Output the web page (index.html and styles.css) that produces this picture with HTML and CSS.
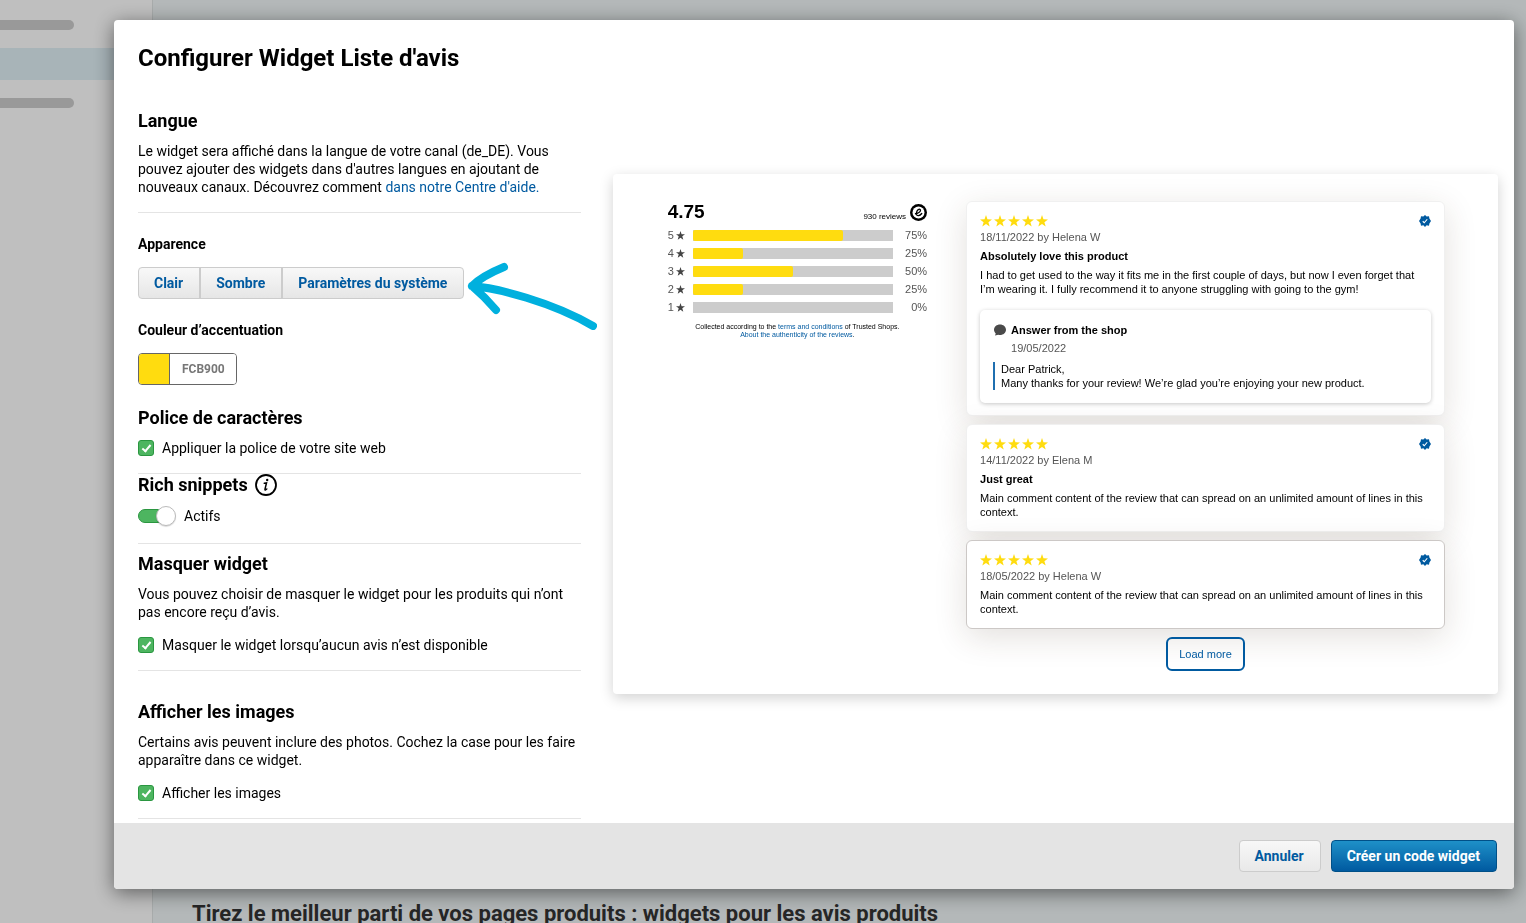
FILE: index.html
```html
<!DOCTYPE html>
<html lang="fr">
<head>
  <meta charset="UTF-8">
  <meta name="viewport" content="width=device-width, initial-scale=1">
  <title>Configurer Widget Liste d'avis</title>
  <link rel="stylesheet" href="styles.css">
</head>
<body>

<!-- shared icons -->
<svg class="icons" aria-hidden="true">
  <symbol id="star" viewBox="0 0 24 24"><path d="M12 0l2.900 8.600 9.100.2-7.200 5.500 2.600 8.700L12 17.800l-7.400 5.200 2.600-8.700L0 8.800l9.100-.2z"/></symbol>
  <symbol id="verified" viewBox="0 0 24 24"><path fill="#005aa0" d="M12 0l3.300 3.200 4.700-.9.800 4.600L24 12l-3.200 4.800-.8 4.700-4.700-.8L12 24l-3.300-3.300-4.700.8-.8-4.700L0 12l3.200-5.100L4 2.300l4.700.9z"/><path fill="none" stroke="#fff" stroke-width="2.200" d="M7.500 12.500l3 3 6-7"/></symbol>
</svg>

<div class="page">
  <aside class="sidebar">
    <div class="nav-item"><span></span></div>
    <div class="nav-item active"></div>
    <div class="nav-item"><span></span></div>
  </aside>
  <main class="content">
    <h2>Tirez le meilleur parti de vos pages produits : widgets pour les avis produits</h2>
  </main>
</div>

<div class="overlay">
  <div class="modal" role="dialog" aria-labelledby="modalTitle">
    <div class="modal-body">
      <h1 id="modalTitle">Configurer Widget Liste d'avis</h1>

      <div class="columns">
        <form class="settings">
          <section>
            <h2>Langue</h2>
            <p>Le widget sera affiché dans la langue de votre canal (de_DE). Vous pouvez ajouter des widgets dans d'autres langues en ajoutant de nouveaux canaux. Découvrez comment <a href="#">dans notre Centre d'aide.</a></p>
          </section>

          <section class="look">
            <h3>Apparence</h3>
            <div class="btn-group">
              <button type="button">Clair</button>
              <button type="button">Sombre</button>
              <button type="button">Paramètres du système</button>
              <svg class="arrow" viewBox="0 0 130 68" aria-hidden="true">
                <path d="M37 5Q15 14 5 24Q18 35 29 48M5 24C30 26 85 40 126 64" fill="none" stroke="#00b0de" stroke-width="8" stroke-linecap="round" stroke-linejoin="round"/>
              </svg>
            </div>
            <h3>Couleur d’accentuation</h3>
            <div class="color-field">
              <input type="color" value="#ffdc0f" aria-label="Couleur d’accentuation">
              <input type="text" value="FCB900" aria-label="Code couleur">
            </div>
            <h2>Police de caractères</h2>
            <label class="check"><input type="checkbox" checked> Appliquer la police de votre site web</label>
          </section>

          <section class="rich">
            <h2>Rich snippets
              <svg class="info" viewBox="0 0 22 22" aria-hidden="true">
                <circle cx="11" cy="11" r="10" fill="none" stroke="#000" stroke-width="1.800"/>
                <circle cx="12.200" cy="6" r="1.200"/>
                <path d="M9.300 9.300l2.200-.4-1.500 6.300q-.2 1 .6.600l1.200-.8" fill="none" stroke="#000" stroke-width="1.500" stroke-linecap="round"/>
              </svg>
            </h2>
            <label class="toggle"><input type="checkbox" checked> Actifs</label>
          </section>

          <section class="hide-widget">
            <h2>Masquer widget</h2>
            <p>Vous pouvez choisir de masquer le widget pour les produits qui n’ont pas encore reçu d’avis.</p>
            <label class="check"><input type="checkbox" checked> Masquer le widget lorsqu’aucun avis n’est disponible</label>
          </section>

          <section class="show-images">
            <h2>Afficher les images</h2>
            <p>Certains avis peuvent inclure des photos. Cochez la case pour les faire apparaître dans ce widget.</p>
            <label class="check"><input type="checkbox" checked> Afficher les images</label>
          </section>
        </form>

        <div class="preview">
          <div class="summary">
            <div class="summary-head">
              <strong>4.75</strong>
              <span>930 reviews</span>
              <svg class="logo" viewBox="0 0 34 34" aria-hidden="true">
                <circle cx="17" cy="17" r="17"/>
                <circle cx="17" cy="17" r="12" fill="#fff"/>
                <path d="M11 19.500Q20.500 17.500 21 13Q21 10 18 10.500Q13.500 12 12.800 18.500Q12.500 23.500 17 23.200Q20.500 22.800 23.500 19" fill="none" stroke="#000" stroke-width="2.600" stroke-linecap="round"/>
              </svg>
            </div>
            <ul class="bars">
              <li>5 <svg><use href="#star"/></svg><span class="bar"><i style="width: 75%"></i></span><b>75%</b></li>
              <li>4 <svg><use href="#star"/></svg><span class="bar"><i style="width: 25%"></i></span><b>25%</b></li>
              <li>3 <svg><use href="#star"/></svg><span class="bar"><i style="width: 50%"></i></span><b>50%</b></li>
              <li>2 <svg><use href="#star"/></svg><span class="bar"><i style="width: 25%"></i></span><b>25%</b></li>
              <li>1 <svg><use href="#star"/></svg><span class="bar"><i style="width: 0%"></i></span><b>0%</b></li>
            </ul>
            <p class="legal">Collected according to the <a href="#">terms and conditions</a> of Trusted Shops.<br><a href="#">About the authenticity of the reviews</a>.</p>
          </div>

          <div class="reviews">
            <article class="review">
              <div class="review-top">
                <svg><use href="#star"/></svg><svg><use href="#star"/></svg><svg><use href="#star"/></svg><svg><use href="#star"/></svg><svg><use href="#star"/></svg>
                <svg class="verified"><use href="#verified"/></svg>
              </div>
              <div class="date">18/11/2022 by Helena W</div>
              <h4>Absolutely love this product</h4>
              <p>I had to get used to the way it fits me in the first couple of days, but now I even forget that I’m wearing it. I fully recommend it to anyone struggling with going to the gym!</p>
              <div class="answer">
                <svg class="bubble" viewBox="0 0 24 24" aria-hidden="true"><path d="M12 1C5.500 1 0 5.500 0 11.500c0 3 1.500 5.500 3.500 7.300L2 23l6.500-1.500c1 .3 2.300.5 3.500.5 6.500 0 12-4.500 12-10.500S18.500 1 12 1z"/></svg>
                <h4>Answer from the shop</h4>
                <div class="date">19/05/2022</div>
                <p>Dear Patrick,<br>Many thanks for your review! We’re glad you’re enjoying your new product.</p>
              </div>
            </article>

            <article class="review">
              <div class="review-top">
                <svg><use href="#star"/></svg><svg><use href="#star"/></svg><svg><use href="#star"/></svg><svg><use href="#star"/></svg><svg><use href="#star"/></svg>
                <svg class="verified"><use href="#verified"/></svg>
              </div>
              <div class="date">14/11/2022 by Elena M</div>
              <h4>Just great</h4>
              <p>Main comment content of the review that can spread on an unlimited amount of lines in this context.</p>
            </article>

            <article class="review selected">
              <div class="review-top">
                <svg><use href="#star"/></svg><svg><use href="#star"/></svg><svg><use href="#star"/></svg><svg><use href="#star"/></svg><svg><use href="#star"/></svg>
                <svg class="verified"><use href="#verified"/></svg>
              </div>
              <div class="date">18/05/2022 by Helena W</div>
              <p>Main comment content of the review that can spread on an unlimited amount of lines in this context.</p>
            </article>

            <button type="button" class="load-more">Load more</button>
          </div>
        </div>
      </div>
    </div>

    <footer class="modal-footer">
      <button type="button" class="btn">Annuler</button>
      <button type="button" class="btn primary">Créer un code widget</button>
    </footer>
  </div>
</div>

</body>
</html>
```

FILE: styles.css
```css
*, *::before, *::after {
  box-sizing: border-box;
}

body {
  margin: 0;
  font-family: Roboto, "Liberation Sans", sans-serif;
  font-size: 14px;
  line-height: 18px;
  color: #000;
}

h1, h2, h3, h4, p, ul {
  margin: 0;
  padding: 0;
}

a {
  color: #005aa0;
  text-decoration: none;
}

button, input {
  font-family: inherit;
  margin: 0;
}

button {
  cursor: pointer;
}

svg {
  flex: none;
}

.icons {
  display: none;
}

/* page behind the dialog */
.page {
  display: flex;
  height: 100vh;
  overflow: hidden;
}

.sidebar {
  width: 153px;
  padding-top: 10px;
  border-right: 1px solid #e0e5e5;
}

.nav-item {
  height: 32px;
  padding-top: 10px;
  margin-bottom: 6px;
}

.nav-item span {
  display: block;
  width: 74px;
  height: 10px;
  background: #ccc;
  border-radius: 0 5px 5px 0;
}

.nav-item.active {
  background: #e0f0f6;
  margin-bottom: 8px;
}

.content {
  flex: 1;
  display: flex;
  flex-direction: column;
  justify-content: flex-end;
  padding: 0 39px;
  background: #f0f6f7;
}

.content h2 {
  margin-bottom: -5px;
  font-size: 22px;
  line-height: 28px;
  color: #333;
}

.overlay {
  position: fixed;
  inset: 0;
  padding: 20px 12px 34px 114px;
  background: rgba(0, 0, 0, 0.25);
}

/* dialog */
.modal {
  display: flex;
  flex-direction: column;
  height: 100%;
  background: #fff;
  border-radius: 4px;
  box-shadow: 0 4px 20px rgba(0, 0, 0, 0.5);
  overflow: hidden;
}

.modal-body {
  flex: 1;
  min-height: 0;
  overflow: hidden;
  padding: 22px 16px 0 24px;
}

h1 {
  font-size: 24px;
  line-height: 32px;
}

.columns {
  display: grid;
  grid-template-columns: 1fr 2fr;
  gap: 32px;
  align-items: start;
  margin-top: 35px;
}

.modal-footer {
  display: flex;
  justify-content: flex-end;
  gap: 10px;
  padding: 17px;
  background: #e4e4e4;
}

.btn {
  height: 32px;
  padding: 0 16px 0 15px;
  font-size: 14px;
  font-weight: 700;
  color: #005aa0;
  background: linear-gradient(#f8f8f8, #e9e9e9);
  border: 1px solid #ccc;
  border-radius: 4px;
}

.btn.primary {
  color: #fff;
  background: linear-gradient(#1e90c8, #005aa0);
  border-color: #005088;
}

/* settings column */
.settings section {
  padding-bottom: 16px;
  border-bottom: 1px solid #e4e4e4;
}

.settings h2 {
  display: flex;
  align-items: center;
  gap: 7px;
  margin-bottom: 9px;
  font-size: 18px;
  line-height: 24px;
}

.settings h3 {
  margin-bottom: 13px;
  font-size: 14px;
  line-height: 20px;
}

.settings .look {
  padding-top: 21px;
}

.settings .rich h2 {
  line-height: 22px;
}

.settings .hide-widget {
  padding-top: 8px;
}

.settings .show-images {
  padding-top: 29px;
}

.settings p + label {
  margin-top: 15px;
}

.info {
  width: 22px;
  height: 22px;
}

.btn-group {
  position: relative;
  display: flex;
  width: max-content;
  margin-bottom: 21px;
  border: 1px solid #ccc;
  border-radius: 4px;
  background: linear-gradient(#f8f8f8, #e6e6e6);
}

.btn-group button {
  height: 30px;
  padding: 0 16px 0 15px;
  font-size: 14px;
  font-weight: 700;
  color: #005aa0;
  background: none;
  border: 0;
}

.btn-group button + button {
  border-left: 2px solid #ccc;
}

.arrow {
  position: absolute;
  left: 100%;
  top: -6px;
  width: 130px;
  height: 68px;
  margin-left: 4px;
}

.color-field {
  display: flex;
  width: 99px;
  height: 32px;
  margin-bottom: 21px;
  border: 1px solid #666;
  border-radius: 4px;
  overflow: hidden;
}

.color-field input {
  border: 0;
  padding: 0;
}

.color-field input[type="color"] {
  width: 31px;
  height: 30px;
  appearance: none;
  background: #ffdc0f;
  border-right: 1px solid #666;
}

.color-field input::-webkit-color-swatch-wrapper {
  padding: 0;
}

.color-field input::-webkit-color-swatch {
  border: 0;
}

.color-field input[type="text"] {
  flex: 1;
  min-width: 0;
  padding-left: 12px;
  font-size: 12px;
  font-weight: 700;
  color: #777;
}

.check, .toggle {
  display: flex;
  align-items: center;
  gap: 8px;
  height: 18px;
}

.toggle {
  height: 22px;
}

.check input {
  position: relative;
  appearance: none;
  width: 16px;
  height: 16px;
  background: #4db560;
  border: 1px solid #2a9640;
  border-radius: 3px;
}

/* tick */
.check input::after {
  content: '';
  position: absolute;
  left: 5px;
  top: 2px;
  width: 5px;
  height: 9px;
  border: solid #fff;
  border-width: 0 2px 2px 0;
  transform: rotate(40deg);
}

.toggle input {
  position: relative;
  appearance: none;
  width: 38px;
  height: 20px;
}

.toggle input::before {
  content: '';
  position: absolute;
  left: 0;
  top: 3px;
  width: 32px;
  height: 14px;
  background: #4db560;
  border: 1px solid #2a9640;
  border-radius: 7px;
}

.toggle input::after {
  content: '';
  position: absolute;
  right: 0;
  top: 0;
  width: 20px;
  height: 20px;
  background: #fff;
  border: 1px solid #bbb;
  border-radius: 50%;
  box-shadow: 0 1px 1px rgba(0, 0, 0, 0.15);
}

/* widget preview */
.preview {
  display: grid;
  grid-template-columns: 13fr 24fr;
  gap: 39px;
  margin-top: 65px;
  padding: 27px 53px 23px 55px;
  font-family: "Liberation Sans", Arial, sans-serif;
  font-size: 11px;
  line-height: 14px;
  border-radius: 4px;
  box-shadow: 0 4px 14px rgba(0, 0, 0, 0.18);
}

.summary-head {
  display: flex;
  align-items: center;
  gap: 4px;
  height: 22px;
}

.summary-head strong {
  flex: 1;
  font-size: 19px;
}

.summary-head span {
  margin-top: 10px;
  font-size: 8px;
}

.logo {
  width: 17px;
  height: 17px;
}

.bars {
  list-style: none;
  margin-top: 3px;
}

.bars li {
  display: flex;
  align-items: center;
  height: 18px;
  color: #555;
}

.bars svg {
  width: 9px;
  height: 9px;
  margin: 0 8px 0 2px;
  fill: #444;
}

.bar {
  flex: 1;
  height: 11px;
  background: #ccc;
}

.bar i {
  display: block;
  height: 100%;
  background: #ffdc0f;
  border-radius: 2px;
}

.bars b {
  width: 34px;
  font-weight: 400;
  text-align: right;
}

.legal {
  margin-top: 7px;
  font-size: 7px;
  line-height: 8px;
  text-align: center;
}

.review {
  margin-bottom: 8px;
  padding: 13px 13px 12px;
  background: #fff;
  border: 1px solid #f0f0f0;
  border-radius: 6px;
  box-shadow: 0 8px 32px rgba(70, 50, 30, 0.15);
}

.review.selected {
  position: relative;
  border-color: #ccc8c6;
}

.review-top {
  display: flex;
  gap: 2px;
  margin-bottom: 3px;
}

.review-top svg {
  width: 12px;
  height: 12px;
  fill: #ffdc0f;
}

.review-top .verified {
  margin-left: auto;
}

.date {
  color: #555;
}

.review h4 {
  margin-top: 5px;
  font-size: 11px;
}

.review p {
  margin-top: 5px;
}

.answer {
  position: relative;
  margin-top: 14px;
  padding: 13px;
  border-radius: 5px;
  box-shadow: 0 1px 4px rgba(0, 0, 0, 0.22);
}

.answer h4, .answer .date {
  margin: 0 0 4px 18px;
}

.answer p {
  margin-top: 7px;
  padding-left: 6px;
  border-left: 2px solid #1f6fb0;
}

.bubble {
  position: absolute;
  left: 14px;
  top: 14px;
  width: 12px;
  height: 12px;
  fill: #4a4a4a;
}

.load-more {
  position: relative;
  display: block;
  height: 34px;
  margin: 0 auto;
  padding: 0 11px;
  font-size: 11px;
  color: #005aa0;
  background: none;
  border: 2px solid #005aa0;
  border-radius: 6px;
}
```
